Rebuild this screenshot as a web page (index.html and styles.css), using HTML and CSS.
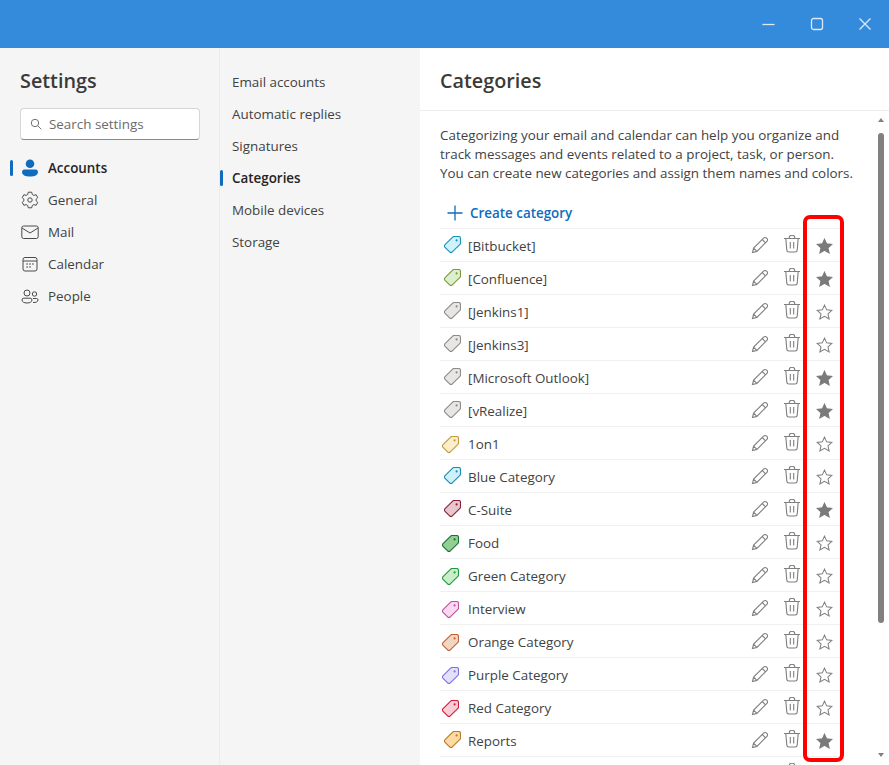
FILE: index.html
```html
<!DOCTYPE html>
<html>
<head>
    <title>Settings - Categories</title>
    <link rel="stylesheet" href="styles.css">
</head>
<body>
    <svg class="defs" width="0" height="0">
        <symbol id="tag" viewBox="0 0 17 17">
            <path d="M10 .5h4.600a1.900 1.900 0 0 1 1.900 1.900V7a1.900 1.900 0 0 1-.56 1.340L8.300 15.940a1.900 1.900 0 0 1-2.680 0l-4.560-4.560a1.900 1.900 0 0 1 0-2.680L8.660 1.060A1.900 1.900 0 0 1 10 .5z"/>
            <circle cx="12.600" cy="4.400" r=".5"/>
        </symbol>
        <symbol id="pencil" viewBox="0 0 18 18">
            <path d="M1.500 16.500l1.100-4.400L12.600 2.100a2.100 2.100 0 0 1 3 0l.3.3a2.100 2.100 0 0 1 0 3L5.900 15.400zM2.600 12.100l3.300 3.300M11.200 3.500l3.300 3.300"/>
        </symbol>
        <symbol id="trash" viewBox="0 0 18 18">
            <path d="M1 3.500h16M6.200 3.500V3a2.800 2.800 0 0 1 5.600 0v.5M2.800 3.500l1 11.600a2 2 0 0 0 2 1.900h6.400a2 2 0 0 0 2-1.900l1-11.600M7.300 7v6.500M10.700 7v6.500"/>
        </symbol>
        <symbol id="star" viewBox="0 0 18 18">
            <path d="M9 1.200l2.300 5 5.500.6-4.100 3.700 1.200 5.400L9 13.100l-4.900 2.800 1.200-5.400L1.200 6.800l5.500-.6z"/>
        </symbol>
    </svg>

    <div class="titlebar">
        <svg class="winbtn" viewBox="0 0 16 16"><path d="M1.500 8.500h12"/></svg>
        <svg class="winbtn" viewBox="0 0 16 16"><rect x="2.500" y="2.500" width="11" height="11" rx="2"/></svg>
        <svg class="winbtn" viewBox="0 0 16 16"><path d="M2.500 2.500l11 11M13.500 2.500l-11 11"/></svg>
    </div>

    <div class="main">
        <nav class="sidebar">
            <h1 class="title">Settings</h1>
            <div class="search">
                <svg class="search-icon" viewBox="0 0 12 12"><circle cx="5" cy="5" r="3.700"/><path d="M7.700 7.700l3.600 3.600"/></svg>
                <span>Search settings</span>
            </div>
            <ul class="nav">
                <li class="nav-item active">
                    <svg class="nav-icon" viewBox="0 0 18 18"><circle class="solid" cx="9" cy="4.800" r="4.300"/><path class="solid" d="M3 10.500h12a2.500 2.500 0 0 1 2 2.400c0 3-3.400 4.600-8 4.600s-8-1.600-8-4.600a2.500 2.500 0 0 1 2-2.400z"/></svg>
                    Accounts
                </li>
                <li class="nav-item">
                    <svg class="nav-icon" viewBox="0 0 18 18"><path d="M7.300 1.200h3.400l.6 2.300 1.500.9 2.300-.7 1.700 2.900-1.700 1.600v1.600l1.700 1.600-1.700 2.900-2.300-.7-1.500.9-.6 2.300H7.300l-.6-2.300-1.500-.9-2.300.7-1.700-2.900 1.700-1.600V8.200L1.200 6.600l1.700-2.900 2.300.7 1.500-.9z"/><circle cx="9" cy="9" r="2.200"/></svg>
                    General
                </li>
                <li class="nav-item">
                    <svg class="nav-icon" viewBox="0 0 18 18"><rect x=".8" y="3" width="16.400" height="12.500" rx="1.800"/><path d="M1 5l8 5 8-5"/></svg>
                    Mail
                </li>
                <li class="nav-item">
                    <svg class="nav-icon" viewBox="0 0 18 18"><rect x="2" y="2.500" width="14" height="13.500" rx="2"/><path d="M2 6h14"/><path class="dots" d="M5.500 9h1.200M8.400 9h1.200M11.300 9h1.200M5.500 12h1.200M8.400 12h1.200"/></svg>
                    Calendar
                </li>
                <li class="nav-item">
                    <svg class="nav-icon" viewBox="0 0 18 18"><circle cx="6" cy="6" r="3"/><circle cx="13.500" cy="7" r="2.200"/><path d="M1 13a1.800 1.800 0 0 1 1.800-1.800h6.400A1.800 1.800 0 0 1 11 13c0 1.800-2 3-5 3s-5-1.200-5-3zM12 15.500c3 .2 5-.8 5-2.500a1.500 1.500 0 0 0-1.500-1.500H12"/></svg>
                    People
                </li>
            </ul>
        </nav>

        <ul class="subnav">
            <li class="subnav-item">Email accounts</li>
            <li class="subnav-item">Automatic replies</li>
            <li class="subnav-item">Signatures</li>
            <li class="subnav-item active">Categories</li>
            <li class="subnav-item">Mobile devices</li>
            <li class="subnav-item">Storage</li>
        </ul>

        <section class="pane">
            <h2 class="title pane-title">Categories</h2>
            <div class="pane-body">
                <div class="content">
                    <p class="intro">Categorizing your email and calendar can help you organize and track messages and events related to a project, task, or person. You can create new categories and assign them names and colors.</p>
                    <div class="create">
                        <svg class="plus" viewBox="0 0 16 16"><path d="M8 .5v15M.5 8h15"/></svg>
                        Create category
                    </div>
                    <ul class="cats">
                        <li class="cat"><svg class="tag t-cyan"><use href="#tag"/></svg><span class="cat-name">[Bitbucket]</span><svg class="act pen"><use href="#pencil"/></svg><svg class="act bin"><use href="#trash"/></svg><svg class="act star on"><use href="#star"/></svg></li>
                        <li class="cat"><svg class="tag t-lime"><use href="#tag"/></svg><span class="cat-name">[Confluence]</span><svg class="act pen"><use href="#pencil"/></svg><svg class="act bin"><use href="#trash"/></svg><svg class="act star on"><use href="#star"/></svg></li>
                        <li class="cat"><svg class="tag t-gray"><use href="#tag"/></svg><span class="cat-name">[Jenkins1]</span><svg class="act pen"><use href="#pencil"/></svg><svg class="act bin"><use href="#trash"/></svg><svg class="act star"><use href="#star"/></svg></li>
                        <li class="cat"><svg class="tag t-gray"><use href="#tag"/></svg><span class="cat-name">[Jenkins3]</span><svg class="act pen"><use href="#pencil"/></svg><svg class="act bin"><use href="#trash"/></svg><svg class="act star"><use href="#star"/></svg></li>
                        <li class="cat"><svg class="tag t-gray"><use href="#tag"/></svg><span class="cat-name">[Microsoft Outlook]</span><svg class="act pen"><use href="#pencil"/></svg><svg class="act bin"><use href="#trash"/></svg><svg class="act star on"><use href="#star"/></svg></li>
                        <li class="cat"><svg class="tag t-gray"><use href="#tag"/></svg><span class="cat-name">[vRealize]</span><svg class="act pen"><use href="#pencil"/></svg><svg class="act bin"><use href="#trash"/></svg><svg class="act star on"><use href="#star"/></svg></li>
                        <li class="cat"><svg class="tag low t-yellow"><use href="#tag"/></svg><span class="cat-name">1on1</span><svg class="act pen"><use href="#pencil"/></svg><svg class="act bin"><use href="#trash"/></svg><svg class="act star"><use href="#star"/></svg></li>
                        <li class="cat"><svg class="tag t-blue"><use href="#tag"/></svg><span class="cat-name">Blue Category</span><svg class="act pen"><use href="#pencil"/></svg><svg class="act bin"><use href="#trash"/></svg><svg class="act star"><use href="#star"/></svg></li>
                        <li class="cat"><svg class="tag t-wine"><use href="#tag"/></svg><span class="cat-name">C-Suite</span><svg class="act pen"><use href="#pencil"/></svg><svg class="act bin"><use href="#trash"/></svg><svg class="act star on"><use href="#star"/></svg></li>
                        <li class="cat"><svg class="tag low t-forest"><use href="#tag"/></svg><span class="cat-name">Food</span><svg class="act pen"><use href="#pencil"/></svg><svg class="act bin"><use href="#trash"/></svg><svg class="act star"><use href="#star"/></svg></li>
                        <li class="cat"><svg class="tag low t-green"><use href="#tag"/></svg><span class="cat-name">Green Category</span><svg class="act pen"><use href="#pencil"/></svg><svg class="act bin"><use href="#trash"/></svg><svg class="act star"><use href="#star"/></svg></li>
                        <li class="cat"><svg class="tag low t-pink"><use href="#tag"/></svg><span class="cat-name">Interview</span><svg class="act pen"><use href="#pencil"/></svg><svg class="act bin"><use href="#trash"/></svg><svg class="act star"><use href="#star"/></svg></li>
                        <li class="cat"><svg class="tag low t-orange"><use href="#tag"/></svg><span class="cat-name">Orange Category</span><svg class="act pen"><use href="#pencil"/></svg><svg class="act bin"><use href="#trash"/></svg><svg class="act star"><use href="#star"/></svg></li>
                        <li class="cat"><svg class="tag low t-purple"><use href="#tag"/></svg><span class="cat-name">Purple Category</span><svg class="act pen"><use href="#pencil"/></svg><svg class="act bin"><use href="#trash"/></svg><svg class="act star"><use href="#star"/></svg></li>
                        <li class="cat"><svg class="tag low t-red"><use href="#tag"/></svg><span class="cat-name">Red Category</span><svg class="act pen"><use href="#pencil"/></svg><svg class="act bin"><use href="#trash"/></svg><svg class="act star"><use href="#star"/></svg></li>
                        <li class="cat"><svg class="tag t-peach"><use href="#tag"/></svg><span class="cat-name">Reports</span><svg class="act pen"><use href="#pencil"/></svg><svg class="act bin"><use href="#trash"/></svg><svg class="act star on"><use href="#star"/></svg></li>
                        <li class="cat"><span class="cat-name"></span><svg class="act pen"><use href="#pencil"/></svg><svg class="act bin"><use href="#trash"/></svg><svg class="act star"><use href="#star"/></svg></li>
                    </ul>
                </div>
                <div class="scrollbar">
                    <span class="arrow up"></span>
                    <div class="thumb"></div>
                    <span class="arrow down"></span>
                </div>
            </div>
        </section>
    </div>

    <div class="highlight"></div>
</body>
</html>
```

FILE: styles.css
```css
* {
    box-sizing: border-box;
}

html, body {
    height: 100%;
}

body {
    background: white;
    color: #424242;
    display: flex;
    flex-direction: column;
    font-family: "Open Sans", "Noto Sans", sans-serif;
    font-size: 13.4px;
    margin: 0;
    overflow: hidden;
}

ul {
    list-style: none;
    margin: 0;
    padding: 0;
}

.defs {
    position: absolute;
}

.titlebar {
    align-items: center;
    background: #348bdc;
    display: flex;
    flex: none;
    gap: 32px;
    height: 48px;
    justify-content: flex-end;
    padding-right: 16px;
}

.winbtn {
    fill: none;
    height: 16px;
    stroke: #dbeafa;
    stroke-width: 1.3;
    width: 16px;
}

.main {
    display: flex;
    flex: 1;
    min-height: 0;
}

.title {
    color: #3b3a39;
    font-size: 19.800px;
    font-weight: 600;
    line-height: 28px;
    margin: 0;
}

.sidebar {
    background: #f5f5f5;
    border-right: 1px solid #ececec;
    flex: none;
    padding: 19px 19px 0 20px;
    width: 220px;
}

.search {
    align-items: center;
    background: white;
    border: 1px solid #d6d6d6;
    border-bottom-color: #8a8a8a;
    border-radius: 4px;
    color: #6b6b6b;
    display: flex;
    gap: 7px;
    height: 32px;
    margin-top: 13px;
    padding-left: 9px;
}

.search-icon {
    fill: none;
    height: 12px;
    stroke: #707070;
    stroke-width: 1;
    width: 12px;
}

.nav {
    margin-top: 12px;
}

.nav-item {
    align-items: center;
    display: flex;
    gap: 9px;
    height: 32px;
    padding-left: 1px;
    position: relative;
}

.nav-item.active {
    color: #242424;
    font-weight: 600;
}

.nav-item.active::before {
    background: #0f6cbd;
    border-radius: 2px;
    content: "";
    height: 16px;
    left: -10px;
    position: absolute;
    top: 8px;
    width: 3px;
}

.nav-icon {
    fill: none;
    height: 18px;
    stroke: #4a4a4a;
    stroke-width: 1;
    width: 18px;
}

.nav-icon .solid {
    fill: #0f6cbd;
    stroke: none;
}

.nav-icon .dots {
    stroke-width: 1.300;
}

.subnav {
    background: #f5f5f5;
    flex: none;
    padding: 18px 0 0 12px;
    width: 200px;
}

.subnav-item {
    align-items: center;
    display: flex;
    height: 32px;
    position: relative;
}

.subnav-item.active {
    color: #242424;
    font-weight: 600;
}

.subnav-item.active::before {
    background: #0f6cbd;
    border-radius: 2px;
    content: "";
    height: 16px;
    left: -12px;
    position: absolute;
    top: 8px;
    width: 3px;
}

.pane {
    display: flex;
    flex: 1;
    flex-direction: column;
    min-width: 0;
}

.pane-title {
    border-bottom: 1px solid #ececec;
    flex: none;
    height: 63px;
    padding: 19px 0 0 20px;
}

.pane-body {
    display: flex;
    flex: 1;
    min-height: 0;
}

.content {
    flex: 1;
    min-width: 0;
    overflow: hidden;
    padding: 15px 33px 0 20px;
}

.intro {
    line-height: 19px;
    margin: 0;
    width: 416px;
}

.create {
    align-items: center;
    color: #0f6cbd;
    display: flex;
    font-weight: 600;
    gap: 7px;
    height: 31px;
    margin-top: 14px;
    padding-left: 7px;
}

.plus {
    fill: none;
    height: 16px;
    stroke: #0f6cbd;
    stroke-width: 1.300;
    width: 16px;
}

.cat {
    align-items: center;
    border-top: 1px solid #f0f0f0;
    display: flex;
    height: 33px;
}

.tag {
    flex: none;
    height: 17px;
    margin: -1px 7px 0 4px;
    stroke-width: 1.100;
    width: 17px;
}

.tag.low {
    margin: 3px 9px 0 2px;
}

.cat-name {
    flex: 1;
    padding-top: 2px;
}

.act {
    flex: none;
    fill: none;
    height: 18px;
    stroke: #7f7f7f;
    stroke-width: 1.100;
    width: 18px;
}

.pen {
    margin-right: 14px;
}

.bin {
    margin: -2px 14px 0 0;
}

.star {
    height: 17px;
    margin: 3px 7px 0 1px;
    width: 17px;
}

.star.on {
    fill: #7a7a7a;
    stroke: #7a7a7a;
}

.t-cyan { fill: #cff3fd; stroke: #1493bd; }
.t-lime { fill: #dcefcf; stroke: #7d9a3a; }
.t-gray { fill: #e6e6e6; stroke: #8f8a86; }
.t-yellow { fill: #fdeecb; stroke: #c2993a; }
.t-blue { fill: #cdf0fb; stroke: #1b8bb0; }
.t-wine { fill: #e8c6cc; stroke: #8c1f3c; }
.t-forest { fill: #92cf92; stroke: #1c6f38; }
.t-green { fill: #c9eec9; stroke: #1e9a3e; }
.t-pink { fill: #f9d9ef; stroke: #bf4fa0; }
.t-orange { fill: #f2d6c2; stroke: #bf6230; }
.t-purple { fill: #e3e0fa; stroke: #7b70e0; }
.t-red { fill: #f8cdd5; stroke: #d01c3c; }
.t-peach { fill: #fdd9a3; stroke: #b87a22; }

.scrollbar {
    align-items: center;
    display: flex;
    flex: none;
    flex-direction: column;
    padding-top: 7px;
    width: 16px;
}

.thumb {
    background: #808080;
    border-radius: 3px;
    height: 490px;
    margin: 11px 0 auto;
    width: 6px;
}

.arrow {
    border-left: 3px solid transparent;
    border-right: 3px solid transparent;
    height: 0;
    width: 0;
}

.arrow.up {
    border-bottom: 4px solid #808080;
}

.arrow.down {
    border-top: 4px solid #808080;
    margin-bottom: 8px;
}

.highlight {
    border: 4px solid #ff0000;
    border-radius: 7px;
    height: 547px;
    left: 803px;
    position: absolute;
    top: 215px;
    width: 41px;
}
```
